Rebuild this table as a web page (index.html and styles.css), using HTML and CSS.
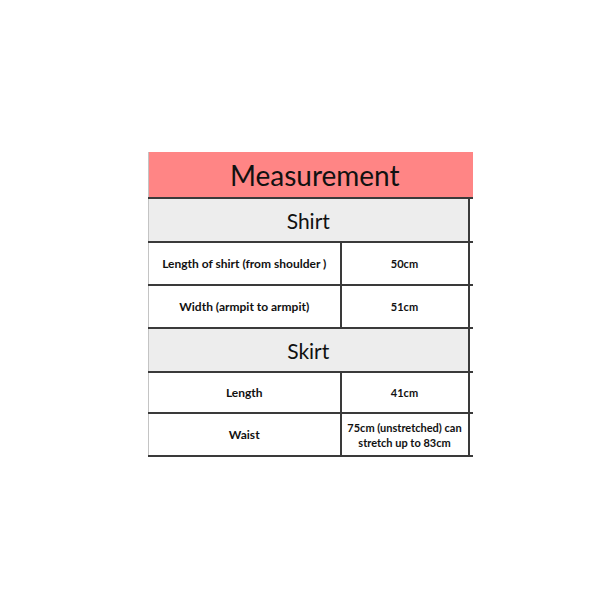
FILE: index.html
```html
<!DOCTYPE html>
<html>
<head>
<meta charset="utf-8">
<link rel="stylesheet" href="styles.css">
</head>
<body>
<div class="page">
  <table class="sheet">
    <colgroup>
      <col class="col-label">
      <col class="col-value">
      <col class="col-gap">
    </colgroup>
    <tr class="title-row"><td colspan="3" class="title">Measurement</td></tr>
    <tr class="section-row"><td colspan="2" class="section">Shirt</td><td class="gap"></td></tr>
    <tr class="data-row"><td class="label">Length of shirt (from shoulder )</td><td class="value">50cm</td><td class="gap"></td></tr>
    <tr class="data-row"><td class="label">Width (armpit to armpit)</td><td class="value">51cm</td><td class="gap"></td></tr>
    <tr class="section-row"><td colspan="2" class="section">Skirt</td><td class="gap"></td></tr>
    <tr class="data-row short"><td class="label">Length</td><td class="value">41cm</td><td class="gap"></td></tr>
    <tr class="data-row"><td class="label">Waist</td><td class="value">75cm (unstretched) can<br>stretch up to 83cm</td><td class="gap"></td></tr>
  </table>
</div>
</body>
</html>
```
FILE: styles.css
```css
html, body {
  margin: 0;
  padding: 0;
  background: #ffffff;
}
.page {
  padding: 152px 0 0 148px;
  font-family: Lato, "Open Sans", sans-serif;
  color: #111111;
}
.sheet {
  border-collapse: collapse;
  table-layout: fixed;
  width: 324px;
  border-left: 1px solid #c4c4c4;
}
.col-label { width: 192px; }
.col-value { width: 128px; }
.col-gap { width: 4px; }
.sheet td {
  padding: 0;
  text-align: center;
  vertical-align: middle;
  white-space: nowrap;
}
.title {
  background: #ff8585;
  height: 45px;
  padding-left: 8px !important;
  font-size: 28px;
  border-bottom: 2px solid #3a3a3a;
}
.section {
  background: #ededed;
  height: 42px;
  font-size: 21px;
  border-right: 2px solid #3a3a3a;
  border-bottom: 2px solid #3a3a3a;
}
.label {
  height: 41px;
  font-size: 12px;
  font-weight: 700;
  border-right: 2px solid #3a3a3a;
  border-bottom: 2px solid #3a3a3a;
}
.value {
  font-size: 11px;
  font-weight: 700;
  line-height: 15px;
  border-right: 2px solid #3a3a3a;
  border-bottom: 2px solid #3a3a3a;
}
.short .label {
  height: 39px;
}
.gap {
  border-bottom: 2px solid #3a3a3a;
}
```
